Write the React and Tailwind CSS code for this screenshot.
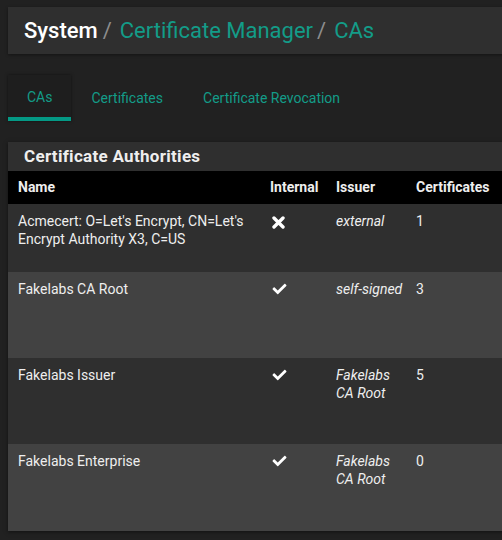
import { FaCheck } from 'react-icons/fa';

const rows = [
  { name: "Acmecert: O=Let's Encrypt, CN=Let's Encrypt Authority X3, C=US", internal: false, issuer: 'external', certs: 1, h: 'h-[68px]', bg: 'bg-[#2f2f2f]' },
  { name: 'Fakelabs CA Root', internal: true, issuer: 'self-signed', certs: 3, h: 'h-[86px]', bg: 'bg-[#424242]' },
  { name: 'Fakelabs Issuer', internal: true, issuer: 'Fakelabs CA Root', certs: 5, h: 'h-[86px]', bg: 'bg-[#2f2f2f]' },
  { name: 'Fakelabs Enterprise', internal: true, issuer: 'Fakelabs CA Root', certs: 0, h: 'h-[87px]', bg: 'bg-[#424242]' },
];

function Cross() {
  return (
    <svg width="13" height="13" viewBox="0 0 13 13" className="mt-[2px]">
      <path d="M2 2 L11 11 M11 2 L2 11" stroke="white" strokeWidth="3.4" strokeLinecap="round" />
    </svg>
  );
}

export default function App() {
  return (
    <div className="w-[502px] h-[540px] overflow-hidden bg-[#212121] pl-2 pt-[7px]" style={{ fontFamily: 'Roboto, "Liberation Sans", sans-serif' }}>
      <div className="w-[700px]">
        <div className="h-[47px] bg-[#2f2f2f] flex items-center pl-4 text-[22px] shadow-[0_1px_3px_rgba(0,0,0,0.4)]">
          <span className="text-white font-medium">System</span>
          <span className="text-[#8d8d8d] ml-[5px] mr-[8px]">/</span>
          <span className="text-[#139c88]">Certificate Manager</span>
          <span className="text-[#8d8d8d] ml-[4px] mr-[8px]">/</span>
          <span className="text-[#139c88]">CAs</span>
        </div>

        <div className="flex mt-[21px] text-[14px] text-[#139c88]">
          <div className="h-[46px] px-[19px] pt-[2px] flex items-center bg-[#1e1e1e] border-b-4 border-[#049985] shadow-[0_0_3px_rgba(0,0,0,0.5)]">CAs</div>
          <div className="h-[46px] px-5 flex items-center">Certificates</div>
          <div className="h-[46px] px-5 flex items-center">Certificate Revocation</div>
        </div>

        <div className="mt-[21px] bg-[#2f2f2f] shadow-[0_1px_4px_rgba(0,0,0,0.5)]">
          <div className="h-[29px] flex items-center pl-4 text-[17px] font-bold tracking-[0.3px] text-[#eeeeee]">Certificate Authorities</div>
          <table className="w-full table-fixed text-[14px] text-[#eeeeee] border-collapse">
            <thead>
              <tr className="bg-black h-[33px] text-left">
                <th className="w-[260px] pl-[10px] font-bold">Name</th>
                <th className="w-[66px] pl-[2px] font-bold">Internal</th>
                <th className="w-[80px] pl-[2px] font-bold">Issuer</th>
                <th className="w-[90px] pl-[2px] font-bold">Certificates</th>
                <th></th>
              </tr>
            </thead>
            <tbody>
              {rows.map(r => (
                <tr key={r.name} className={`${r.h} ${r.bg} align-top leading-[18px]`}>
                  <td className="pl-[10px] pr-3 pt-[8px]">{r.name}</td>
                  <td className="pl-[4px] pt-[10px]">
                    {r.internal ? <FaCheck className="text-white w-[15px] h-[14px]" /> : <Cross />}
                  </td>
                  <td className="pl-[2px] pr-2 pt-[8px] italic">{r.issuer}</td>
                  <td className="pl-[2px] pt-[8px]">{r.certs}</td>
                  <td></td>
                </tr>
              ))}
            </tbody>
          </table>
        </div>
      </div>
    </div>
  );
}
